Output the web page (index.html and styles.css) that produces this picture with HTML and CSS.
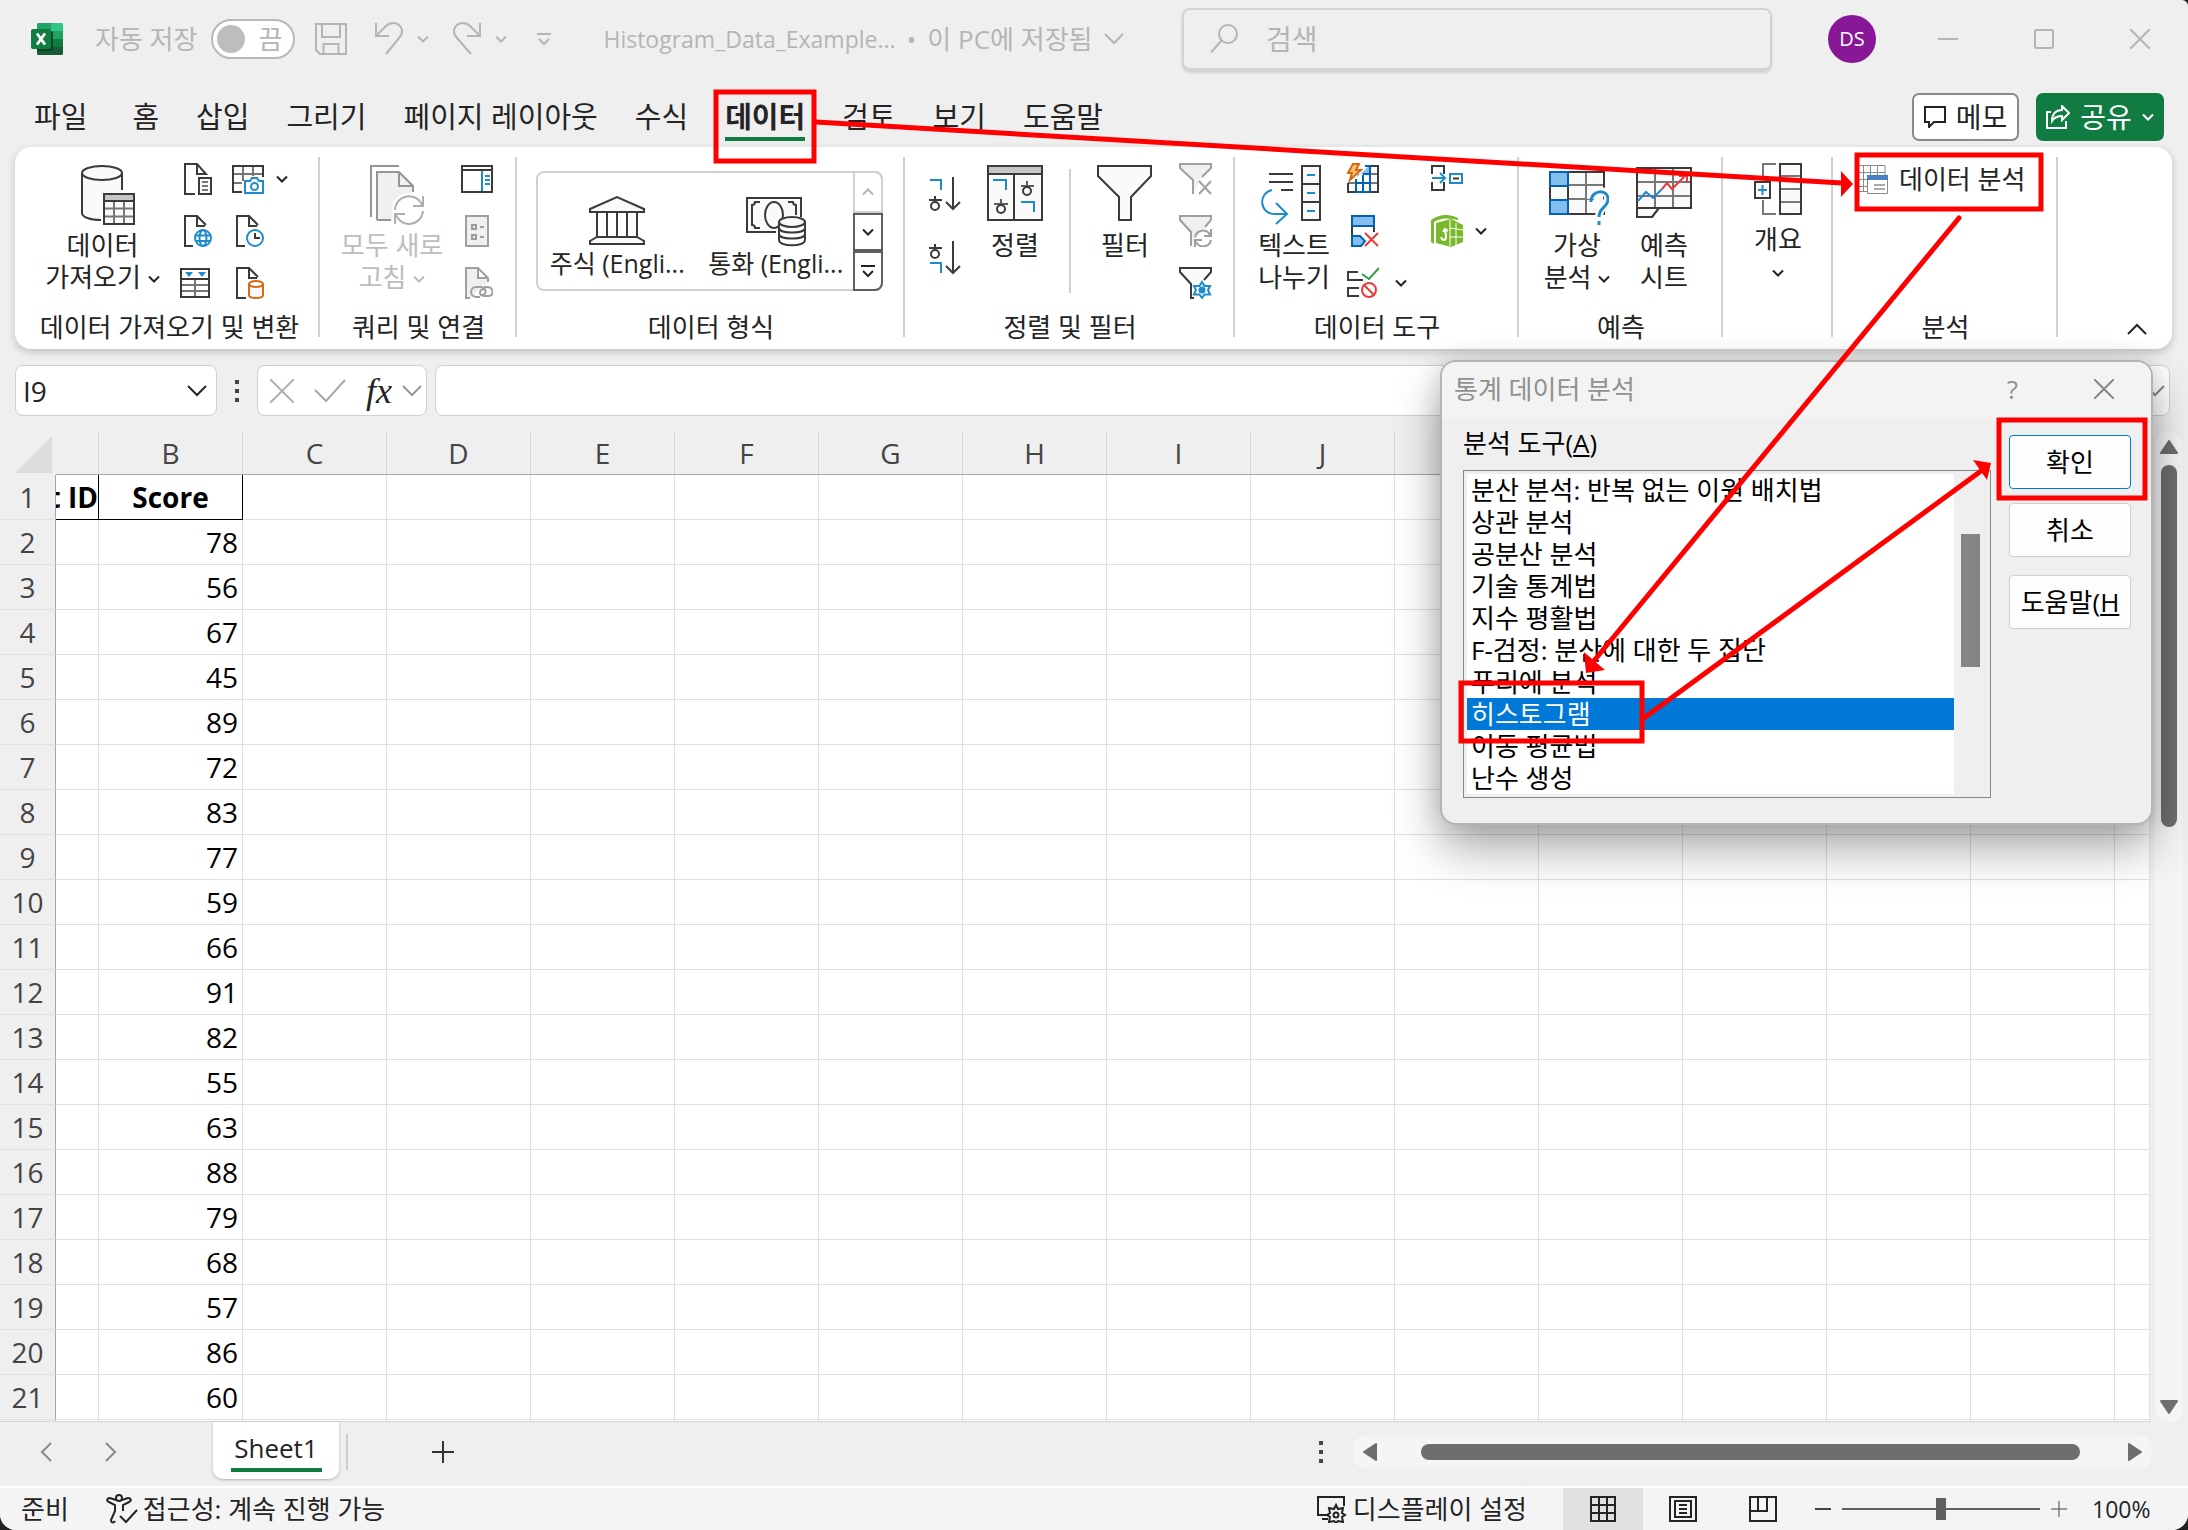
FILE: index.html
```html
<!DOCTYPE html>
<html lang="ko">
<head>
<meta charset="utf-8">
<title>Histogram_Data_Example - Excel</title>
<link rel="stylesheet" href="styles.css">
</head>
<body>
<svg class="defs" aria-hidden="true">
  <symbol id="chev" viewBox="0 0 12 8"><path d="M1 1.5l5 5 5-5" fill="none" stroke="currentColor" stroke-width="2"/></symbol>
  <symbol id="chev-lg" viewBox="0 0 20 12"><path d="M1 1l9 9 9-9" fill="none" stroke="currentColor" stroke-width="2"/></symbol>
  <symbol id="dots" viewBox="0 0 4 22"><path d="M0 0h4v4H0zM0 9h4v4H0zM0 18h4v4H0z" fill="#444"/></symbol>
</svg>
<div class="app">
  <header class="titlebar">
    <svg class="logo" width="32" height="32" viewBox="0 0 32 32"><path d="M6 1.500Q6 0 7.500 0H20v8H6z" fill="#21a366"/><path d="M20 0h10.500Q32 0 32 1.500V8H20z" fill="#33c481"/><path d="M6 8h14v8H6z" fill="#107c41"/><path d="M20 8h12v8H20z" fill="#21a366"/><path d="M6 16h26v8H6z" fill="#107c41"/><path d="M6 24h26v6.500q0 1.500-1.500 1.500h-23Q6 32 6 30.500z" fill="#185c37"/><path d="M6 8h14q2 0 2 2v16q0 2-2 2H6z" fill="#0b4527"/><rect y="6" width="20" height="20" rx="2" fill="#107c41"/><path d="M6 10.500l8 11M14 10.500l-8 11" stroke="#fff" stroke-width="2.800"/></svg>
    <label class="autosave"><span>자동 저장</span><input type="checkbox" class="sr"><span class="switch"><i></i>끔</span></label>
    <div class="quick">
      <button class="save" aria-label="저장"><svg width="32" height="32" viewBox="0 0 32 32" fill="none" stroke="currentColor" stroke-width="2"><path d="M1 1h30v30H5l-4-4zM7 1v13h18V1M8.500 31V21h15v10"/></svg></button>
      <button class="undo" aria-label="실행 취소"><svg width="28" height="34" viewBox="0 0 28 34" fill="none" stroke="currentColor" stroke-width="2"><path d="M1 1v13h13M1 14L11 4c4-4 11-4 14 0s3 8-1 12L11 32"/></svg><svg class="chev"><use href="#chev"/></svg></button>
      <button class="undo" aria-label="다시 실행"><svg width="28" height="34" viewBox="0 0 28 34" fill="none" stroke="currentColor" stroke-width="2"><path d="M27 1v13H14M27 14L17 4C13 0 6 0 3 4s-3 8 1 12l14 16"/></svg><svg class="chev"><use href="#chev"/></svg></button>
      <button class="custom" aria-label="빠른 실행 도구 모음"><svg width="14" height="14" viewBox="0 0 14 14" fill="none" stroke="currentColor" stroke-width="2"><path d="M0 2h14M2 7l5 5 5-5"/></svg></button>
    </div>
    <button class="docname"><span class="fname">Histogram_Data_Example...</span><span>•</span><span>이 PC에 저장됨</span><svg width="20" height="12"><use href="#chev-lg"/></svg></button>
    <label class="search"><svg width="28" height="30" viewBox="0 0 28 30" fill="none" stroke="#b5b5b5" stroke-width="2"><circle cx="18" cy="10" r="9"/><path d="M11.500 16.500L1 28.500"/></svg><input type="search" placeholder="검색" aria-label="검색"></label>
    <button class="avatar">DS</button>
    <div class="winctl">
      <button aria-label="최소화"><svg width="20" height="20" viewBox="0 0 20 20"><path d="M0 10h20" stroke="currentColor" stroke-width="2"/></svg></button>
      <button aria-label="최대화"><svg width="20" height="20" viewBox="0 0 20 20"><rect x="1" y="1" width="18" height="18" rx="2" fill="none" stroke="currentColor" stroke-width="2"/></svg></button>
      <button aria-label="닫기"><svg width="20" height="20" viewBox="0 0 20 20"><path d="M0 0l20 20M20 0L0 20" stroke="currentColor" stroke-width="2"/></svg></button>
    </div>
  </header>

  <nav class="tabs">
    <button class="file">파일</button><button>홈</button><button>삽입</button><button>그리기</button><button>페이지 레이아웃</button><button>수식</button><button class="active">데이터</button><button>검토</button><button>보기</button><button>도움말</button>
    <div class="tab-actions">
      <button class="memo"><svg width="22" height="22" viewBox="0 0 22 22"><path d="M1 1h20v15H10l-5 5v-5H1z" fill="none" stroke="#242424" stroke-width="2"/></svg>메모</button>
      <button class="share"><svg width="24" height="24" viewBox="0 0 24 24" fill="none" stroke="#fff" stroke-width="2"><path d="M5 7H1v16h19v-7M16 1l7 7-7 7v-4c-5 0-8 2-10 5 0-7 4-11 10-11z"/></svg>공유<svg class="chev"><use href="#chev"/></svg></button>
    </div>
  </nav>

  <section class="ribbon">
    <div class="group g1">
      <div class="tools">
        <button class="big"><svg width="64" height="60" viewBox="-10 0 64 60" fill="none" stroke="#3b3a39" stroke-width="2"><path d="M1 8v40c0 4 9 7 19 7l1-27h20V8" fill="#fafafa" stroke="none"/><ellipse cx="21" cy="8" rx="20" ry="7" fill="#fafafa"/><path d="M1 8v40c0 4 8 7 19 7M41 8v17"/><path d="M23 29h30v30H23z" fill="#fafafa"/><path d="M24 30h28v5H24z" fill="#c8c6c4" stroke="none"/><path d="M23 43.500h30M23 51.500h30M33 36v23M43 36v23" stroke="#797775"/><path d="M23 29h30v30H23zM23 36h30"/></svg><span>데이터<br>가져오기 <svg class="chev"><use href="#chev"/></svg></span></button>
        <div class="small">
          <button aria-label="텍스트/CSV에서"><svg width="32" height="32" viewBox="0 0 32 32" fill="none" stroke="#3b3a39" stroke-width="2"><path d="M15 31H5V1h12l9 10h-9V1"/><path d="M19 15h12v16H19z" fill="#fafafa"/><path d="M22 19h6M22 23h6M22 27h6" stroke="#797775"/></svg></button>
          <button aria-label="그림에서"><svg width="32" height="32" viewBox="0 0 32 32" fill="none" stroke="#3b3a39" stroke-width="2"><path d="M1 11h30M11 3v15M21 3v10M1 20h9" stroke="#797775"/><path d="M10 29H1V3h30v11"/><path d="M13 18h5l2-3h5l2 3h4v12H13z" fill="#fff" stroke="#1e8bcd"/><circle cx="22.500" cy="23.500" r="3.500" stroke="#1e8bcd"/></svg><svg class="chev"><use href="#chev"/></svg></button>
          <button aria-label="웹에서"><svg width="32" height="32" viewBox="0 0 32 32" fill="none" stroke="#3b3a39" stroke-width="2"><path d="M13 31H5V1h12l9 9M17 1v10h8"/><circle cx="23" cy="23" r="8" stroke="#1e8bcd"/><ellipse cx="23" cy="23" rx="3.500" ry="8" stroke="#1e8bcd"/><path d="M15 20.500h16M15 26h16" stroke="#1e8bcd"/></svg></button>
          <button aria-label="최근 원본"><svg width="32" height="32" viewBox="0 0 32 32" fill="none" stroke="#3b3a39" stroke-width="2"><path d="M13 31H5V1h12l9 9M17 1v10h8"/><circle cx="23" cy="23" r="8" fill="#fff" stroke="#1e8bcd"/><path d="M23 18v5h5"/></svg></button>
          <button aria-label="테이블/범위에서"><svg width="32" height="32" viewBox="0 0 32 32" fill="none" stroke="#3b3a39" stroke-width="2"><path d="M1 18h29M1 24h29M15 12v18" stroke="#797775"/><path d="M1 2h28v28H1zM1 12h28"/><path d="M5 5h8l-4 5zM18 5h8l-4 5z" fill="#1e8bcd" stroke="none"/></svg></button>
          <button aria-label="기존 연결"><svg width="32" height="32" viewBox="0 0 32 32" fill="none" stroke="#3b3a39" stroke-width="2"><path d="M14 31H5V1h12l9 9M17 1v10h8"/><path d="M17 17v11c0 4 14 4 14 0V17" fill="#fafafa" stroke="#d8680b"/><ellipse cx="24" cy="17" rx="7" ry="3" fill="#fff" stroke="#d8680b"/></svg></button>
        </div>
      </div>
      <h2>데이터 가져오기 및 변환</h2>
    </div>
    <div class="group g2">
      <div class="tools">
        <button class="big dim"><svg width="64" height="60" viewBox="-10 0 64 60" fill="none" stroke="#979593" stroke-width="2"><path d="M1 52V1h28"/><path d="M8 8h21l13 14v6L22 54H8z" fill="#f0f0f0" stroke="none"/><path d="M7 55V7h22l14 14v6M29 7v14h14M7 55h14"/><circle cx="39" cy="45" r="17" fill="#fff" stroke="none"/><path d="M25 45a14 14 0 0 1 27-5M53 31v10H43M53 46a14 14 0 0 1-27 4M25 59V49h10" stroke="#b0aeac"/></svg><span>모두 새로<br>고침 <svg class="chev"><use href="#chev"/></svg></span></button>
        <div class="small one">
          <button aria-label="쿼리 및 연결"><svg width="32" height="32" viewBox="0 0 32 32" fill="none" stroke="#3b3a39" stroke-width="2"><path d="M1 3h30v26H1zM1 7h30"/><path d="M21 8v20M24 13h5M24 17h5M24 21h5" stroke="#1e8bcd"/></svg></button>
          <button aria-label="속성" disabled><svg width="32" height="32" viewBox="0 0 32 32" fill="none" stroke="#a19f9d" stroke-width="2"><path d="M5 1h22v30H5z" fill="#f0f0f0"/><path d="M11 10h4v4h-4zM11 20h4v4h-4zM19 12h4M19 22h4"/></svg></button>
          <button aria-label="통합 문서 링크" disabled><svg width="32" height="32" viewBox="0 0 32 32" fill="none" stroke="#a19f9d" stroke-width="2"><path d="M9 31H5V1h12l10 10v4M17 1v10h10" fill="#f0f0f0"/><path d="M19 30h-4c-7-1-6-10 0-10h5c6 1 6 8 1 8h-2M23 20h4c6 1 6 9 0 9h-4c-6-1-5-7 1-7"/></svg></button>
        </div>
      </div>
      <h2>쿼리 및 연결</h2>
    </div>
    <div class="group g3">
      <div class="tools">
        <div class="gallery">
          <button><svg width="56" height="52" viewBox="0 0 56 52" fill="none" stroke="#3b3a39" stroke-width="2"><path d="M1 17v-3L28 2l27 12v3zM1 49v-3l7-4h40l7 4v3z" fill="#fafafa"/><path d="M8 18v24M18 18v24M28 18v24M38 18v24M48 18v24"/></svg><span>주식 (Engli...</span></button>
          <button><svg width="60" height="52" viewBox="0 0 60 52" fill="none" stroke="#3b3a39" stroke-width="2"><path d="M30 37H1V3h54v19" fill="#fafafa"/><path d="M14 7H9q0 3-3 3v20q3 0 3 3h5M42 7h5q0 3 3 3v10"/><ellipse cx="28" cy="20" rx="9" ry="13"/><path d="M33 27v18c0 7 26 7 26 0V27" fill="#fff"/><ellipse cx="46" cy="27" rx="13" ry="5" fill="#fafafa"/><path d="M33 33c0 6 26 6 26 0M33 39c0 6 26 6 26 0"/></svg><span>통화 (Engli...</span></button>
          <div class="gallery-nav">
            <button disabled aria-label="이전"><svg class="chev up"><use href="#chev"/></svg></button>
            <button aria-label="다음"><svg class="chev"><use href="#chev"/></svg></button>
            <button aria-label="자세히"><svg width="14" height="14" viewBox="0 0 14 14" fill="none" stroke="#242424" stroke-width="2"><path d="M0 2h14M2 7l5 5 5-5"/></svg></button>
          </div>
        </div>
      </div>
      <h2>데이터 형식</h2>
    </div>
    <div class="group g4">
      <div class="tools">
        <div class="sorts">
          <button aria-label="오름차순"><svg width="34" height="36" viewBox="0 0 34 36" fill="none" stroke="#3b3a39" stroke-width="2"><path d="M3 4h11v10" stroke="#1e8bcd"/><path d="M8 20v3M2 24h13M26 1v32M19 26l7 7 7-7"/><circle cx="8" cy="30" r="4"/></svg></button>
          <button aria-label="내림차순"><svg width="34" height="36" viewBox="0 0 34 36" fill="none" stroke="#3b3a39" stroke-width="2"><path d="M3 23h11v10" stroke="#1e8bcd"/><path d="M8 4v3M2 8h13M26 1v32M19 26l7 7 7-7"/><circle cx="8" cy="14" r="4"/></svg></button>
        </div>
        <button class="big"><svg width="56" height="60" viewBox="0 0 56 60" fill="none" stroke="#3b3a39" stroke-width="2"><path d="M1 1h54v54H1z" fill="#fafafa"/><path d="M2 2h52v7H2z" fill="#c8c6c4" stroke="none"/><path d="M1 1h54v54H1zM1 9h54M27 9v46"/><path d="M6 15h13v10M34 37h13v10" stroke="#1e8bcd"/><path d="M40 16v4M34 21h13M14 34v4M7 39h14" stroke="#605e5c"/><circle cx="40" cy="26" r="4"/><circle cx="14" cy="44" r="4"/></svg><span>정렬</span></button>
        <hr>
        <button class="big"><svg width="56" height="60" viewBox="0 0 56 60" fill="none" stroke="#3b3a39" stroke-width="2"><path d="M1 1h53v10L34 32v23H22V32L1 11z" fill="#fafafa"/></svg><span>필터</span></button>
        <div class="small one">
          <button aria-label="지우기" disabled><svg width="34" height="32" viewBox="0 0 34 32" fill="none" stroke="#a19f9d" stroke-width="2"><path d="M14 31V17L1 5V1h31v4l-9 9" fill="#f0f0f0"/><path d="M20 18l12 13M32 18L20 31"/></svg></button>
          <button aria-label="다시 적용" disabled><svg width="34" height="32" viewBox="0 0 34 32" fill="none" stroke="#a19f9d" stroke-width="2"><path d="M12 31V17L1 5V1h31v4l-6 7" fill="#f0f0f0"/><path d="M16 22a8 8 0 0 1 15-2M32 14v7h-7M32 25a8 8 0 0 1-15 2M16 32v-7h7"/></svg></button>
          <button aria-label="고급"><svg width="34" height="32" viewBox="0 0 34 32" fill="none" stroke="#3b3a39" stroke-width="2"><path d="M15 31h-3V17L1 5V1h31v4l-7 8" fill="#fafafa"/><circle cx="23" cy="23" r="9" fill="#fff" stroke="none"/><path d="M23 15l2.500 4 5.500 0-2 4 2 4.500h-5.500L23 31l-2.500-3.500H15l2-4.500-2-4h5.500z" stroke="#1e8bcd"/><circle cx="23" cy="23" r="2.500" fill="#1e8bcd" stroke="#1e8bcd"/></svg></button>
        </div>
      </div>
      <h2>정렬 및 필터</h2>
    </div>
    <div class="group g5">
      <div class="tools">
        <button class="big"><svg width="66" height="60" viewBox="0 0 66 60" fill="none" stroke="#3b3a39" stroke-width="2"><path d="M8 9h24M8 17h24M20 25h12"/><path d="M41 1h18v54H41zM41 19h18M41 37h18" fill="#fafafa"/><path d="M46 10h8M46 28h8M46 46h8M11 25C-3 28-2 49 14 49h11M15 38l11 11-11 10" stroke="#1e8bcd"/></svg><span>텍스트<br>나누기</span></button>
        <div class="small wide">
          <button aria-label="빠른 채우기"><svg width="32" height="32" viewBox="0 0 32 32" fill="none" stroke="#3b3a39" stroke-width="2"><path d="M31 11h-7M31 20H1" stroke="#797775"/><path d="M1 20v9h30V3h-7"/><path d="M10 14L22 3v8H10z" fill="#83beec" stroke="none"/><path d="M9 16v13h14V3h-5M9 20h14M16 12v17M16 11h7" stroke="#0063b1"/><path d="M6 1h6l-3 6h5L3 17l2-7H1z" fill="#ffc078" stroke="#d8680b"/></svg></button>
          <button aria-label="통합"><svg width="32" height="32" viewBox="0 0 32 32" fill="none" stroke="#3b3a39" stroke-width="2"><path d="M1 11V3h12v8M1 19v8h12v-8"/><path d="M1 15h12M9 10l5 5-5 5M19 11h12v9H19z" stroke="#1e8bcd"/><path d="M22 15.500h6"/></svg></button>
          <button aria-label="중복된 항목 제거"><svg width="32" height="32" viewBox="0 0 32 32" fill="none" stroke="#0063b1" stroke-width="2"><path d="M5 1h22v10H5z" fill="#83beec"/><path d="M5 21h8l5 5-4 5H5z" fill="#83beec"/><path d="M5 12v8M27 12v5" stroke="#3b3a39"/><path d="M18 18l13 13M31 18L18 31" stroke="#e83b3b"/></svg></button>
          <button aria-label="관계"><svg width="32" height="32" viewBox="0 0 32 32"><path d="M0 5Q13-4 27 3v2Q12 1 3 7v22l-3-2z" fill="#78b82a"/><path d="M5 8l15-4 12 6v17l-12 5-15-4z" fill="#78b82a"/><path d="M19 5v26M25 8v22M19 13l13 2M19 22h13" stroke="#fff"/><path d="M14 14l1 7q0 4-2 4t-3-3M12 17l2-3 3 2" fill="none" stroke="#fff" stroke-width="2"/></svg><svg class="chev"><use href="#chev"/></svg></button>
          <button aria-label="데이터 유효성 검사"><svg width="32" height="32" viewBox="0 0 32 32" fill="none" stroke="#3b3a39" stroke-width="2"><path d="M11 5H1v8h15M12 21H1v8h11"/><path d="M15 7l7 5L32 1" stroke="#2ea043"/><circle cx="22" cy="23" r="7" stroke="#e83b3b"/><path d="M17 18l10 10" stroke="#e83b3b"/></svg><svg class="chev far"><use href="#chev"/></svg></button>
        </div>
      </div>
      <h2>데이터 도구</h2>
    </div>
    <div class="group g6">
      <div class="tools">
        <button class="big"><svg width="64" height="60" viewBox="-4 0 64 60" fill="none" stroke="#3b3a39" stroke-width="2"><path d="M1 7h54v42H1z" fill="#fafafa"/><path d="M19 20h36M19 34h26M37 7v42" stroke="#797775"/><path d="M19 7h36v18M19 49h22"/><path d="M1 7h18v14H1zM1 35h18v14H1z" fill="#83beec" stroke="#0063b1"/><path d="M1 22v12M19 22v12"/><path d="M42 34c1-11 17-10 17-1 0 8-9 8-9 19" stroke="#fff" stroke-width="8"/><path d="M42 37c0-13 17-13 17-3 0 9-9 8-9 18M50 56v4" stroke="#1e8bcd" stroke-width="3"/></svg><span>가상<br>분석 <svg class="chev"><use href="#chev"/></svg></span></button>
        <button class="big"><svg width="56" height="60" viewBox="0 0 56 60" fill="none" stroke="#3b3a39" stroke-width="2"><path d="M1 3h54v40H23l-7 9H1z" fill="#fafafa"/><path d="M1 17h54M1 31h54M19 3v40M37 3v40" stroke="#797775"/><path d="M1 3h54v40H23l-7 9H1zM1 43h22"/><path d="M2 36l8-9 7 6 9-9" stroke="#1e8bcd"/><path d="M26 24l5-6 5 6 14-14M43 11h8v7" stroke="#e83b3b"/></svg><span>예측<br>시트</span></button>
      </div>
      <h2>예측</h2>
    </div>
    <div class="group g7">
      <div class="tools">
        <button class="big"><svg width="50" height="56" viewBox="0 0 50 56" fill="none" stroke="#3b3a39" stroke-width="2"><path d="M23 1H10v16M10 37v14h13" stroke="#797775"/><path d="M27 1h21v50H27z" fill="#fafafa"/><path d="M27 13h21M27 26h21M27 39h21" stroke="#797775"/><path d="M27 1h21v50H27z"/><path d="M2 19h15v16H2z" fill="#fff"/><path d="M5 27h9M9.500 22v10" stroke="#1e8bcd"/></svg><span>개요<br><svg class="chev"><use href="#chev"/></svg></span></button>
      </div>
    </div>
    <div class="group g8">
      <div class="tools">
        <button class="analysis"><svg width="32" height="32" viewBox="0 0 32 32" fill="none" stroke="#8a8a8a"><path d="M0 2.500h28v26H0M0 9.500h28M0 16.500h12M0 23.500h12M6.500 2v26M13.500 2v10M20.500 2v10"/><path d="M10.500 12.500h20v18h-20z" fill="#fff"/><path d="M10 12h21v5H10z" fill="#4a80c0" stroke="none"/><path d="M17 22h11M17 26h11" stroke="#555"/></svg>데이터 분석</button>
      </div>
      <h2>분석</h2>
    </div>
    <button class="collapse" aria-label="리본 축소"><svg class="up" width="20" height="12"><use href="#chev-lg"/></svg></button>
  </section>

  <div class="formula">
    <label class="namebox"><input value="I9" aria-label="이름 상자"><svg width="20" height="12"><use href="#chev-lg"/></svg></label>
    <svg width="4" height="22"><use href="#dots"/></svg>
    <div class="fx">
      <button aria-label="취소"><svg width="24" height="24" viewBox="0 0 24 24"><path d="M0 0l24 24M24 0L0 24" stroke="#b0b0b0" stroke-width="2"/></svg></button>
      <button aria-label="입력"><svg width="32" height="24" viewBox="0 0 32 24"><path d="M1 11l11 11L31 1" fill="none" stroke="#a8a8a8" stroke-width="2"/></svg></button>
      <button class="fn">fx</button>
      <button aria-label="함수 목록"><svg class="grey" width="20" height="12"><use href="#chev-lg"/></svg></button>
    </div>
    <label class="entry"><input aria-label="수식 입력줄"><svg width="20" height="12"><use href="#chev-lg"/></svg></label>
  </div>

  <main class="sheet">
    <div class="grid">
      <table>
        <colgroup><col class="cn"><col class="ca"><col class="cx"><col class="cx"><col class="cx"><col class="cx"><col class="cx"><col class="cx"><col class="cx"><col class="cx"><col class="cx"><col class="cx"><col class="cx"><col class="cx"><col class="cx"><col class="cx"><col></colgroup>
        <thead><tr><th class="corner"><svg width="37" height="37" viewBox="0 0 37 37"><path d="M37 0v37H0z" fill="#dcdcdc"/></svg></th><th></th><th>B</th><th>C</th><th>D</th><th>E</th><th>F</th><th>G</th><th>H</th><th>I</th><th>J</th><th>K</th><th>L</th><th>M</th><th>N</th><th>O</th><th></th></tr></thead>
        <tbody>
        <tr><th>1<td class="head"><div>t ID</div><td class="head">Score<td><td><td><td><td><td><td><td><td><td><td><td><td><td>
        <tr><th>2<td><td>78<td><td><td><td><td><td><td><td><td><td><td><td><td><td>
        <tr><th>3<td><td>56<td><td><td><td><td><td><td><td><td><td><td><td><td><td>
        <tr><th>4<td><td>67<td><td><td><td><td><td><td><td><td><td><td><td><td><td>
        <tr><th>5<td><td>45<td><td><td><td><td><td><td><td><td><td><td><td><td><td>
        <tr><th>6<td><td>89<td><td><td><td><td><td><td><td><td><td><td><td><td><td>
        <tr><th>7<td><td>72<td><td><td><td><td><td><td><td><td><td><td><td><td><td>
        <tr><th>8<td><td>83<td><td><td><td><td><td><td><td><td><td><td><td><td><td>
        <tr><th>9<td><td>77<td><td><td><td><td><td><td><td><td><td><td><td><td><td>
        <tr><th>10<td><td>59<td><td><td><td><td><td><td><td><td><td><td><td><td><td>
        <tr><th>11<td><td>66<td><td><td><td><td><td><td><td><td><td><td><td><td><td>
        <tr><th>12<td><td>91<td><td><td><td><td><td><td><td><td><td><td><td><td><td>
        <tr><th>13<td><td>82<td><td><td><td><td><td><td><td><td><td><td><td><td><td>
        <tr><th>14<td><td>55<td><td><td><td><td><td><td><td><td><td><td><td><td><td>
        <tr><th>15<td><td>63<td><td><td><td><td><td><td><td><td><td><td><td><td><td>
        <tr><th>16<td><td>88<td><td><td><td><td><td><td><td><td><td><td><td><td><td>
        <tr><th>17<td><td>79<td><td><td><td><td><td><td><td><td><td><td><td><td><td>
        <tr><th>18<td><td>68<td><td><td><td><td><td><td><td><td><td><td><td><td><td>
        <tr><th>19<td><td>57<td><td><td><td><td><td><td><td><td><td><td><td><td><td>
        <tr><th>20<td><td>86<td><td><td><td><td><td><td><td><td><td><td><td><td><td>
        <tr><th>21<td><td>60<td><td><td><td><td><td><td><td><td><td><td><td><td><td>
        <tr><th><td><td><td><td><td><td><td><td><td><td><td><td><td><td><td><td>
        </tbody>
      </table>
    </div>
    <div class="vscroll">
      <svg width="18" height="14" viewBox="0 0 18 14"><path d="M9 1l8 12H1z" fill="#6e6e6e" stroke="#6e6e6e" stroke-linejoin="round" stroke-width="2"/></svg>
      <i></i>
      <svg width="18" height="14" viewBox="0 0 18 14"><path d="M9 13L1 1h16z" fill="#6e6e6e" stroke="#6e6e6e" stroke-linejoin="round" stroke-width="2"/></svg>
    </div>
  </main>

  <div class="sheetbar">
    <button class="nav" aria-label="이전 시트"><svg width="12" height="20" viewBox="0 0 12 20"><path d="M11 1l-9 9 9 9" fill="none" stroke="#8a8a8a" stroke-width="2"/></svg></button>
    <button class="nav next" aria-label="다음 시트"><svg width="12" height="20" viewBox="0 0 12 20"><path d="M1 1l9 9-9 9" fill="none" stroke="#8a8a8a" stroke-width="2"/></svg></button>
    <button class="sheet-tab"><span>Sheet1</span></button>
    <span class="divider"></span>
    <button class="add" aria-label="새 시트"><svg width="22" height="22" viewBox="0 0 22 22"><path d="M0 11h22M11 0v22" stroke="#333" stroke-width="2"/></svg></button>
    <svg class="grip" width="4" height="22"><use href="#dots"/></svg>
    <div class="hscroll">
      <svg width="14" height="18" viewBox="0 0 14 18"><path d="M1 9l12-8v16z" fill="#6e6e6e" stroke="#6e6e6e" stroke-linejoin="round" stroke-width="2"/></svg>
      <i></i>
      <svg width="14" height="18" viewBox="0 0 14 18"><path d="M13 9L1 1v16z" fill="#6e6e6e" stroke="#6e6e6e" stroke-linejoin="round" stroke-width="2"/></svg>
    </div>
  </div>

  <footer class="status">
    <span>준비</span>
    <button class="access"><svg width="32" height="30" viewBox="0 0 32 30" fill="none" stroke="#242424" stroke-width="2"><circle cx="13" cy="4" r="3"/><path d="M10 6L4 4C1 4 0 7 3 8l6 3v6L5 26c0 3 3 3 4 1M16 6l6-2c3 0 4 3 1 4l-6 3v6M14 22l6 6L31 16"/></svg>접근성: 계속 진행 가능</button>
    <button class="display"><svg width="30" height="28" viewBox="0 0 30 28" fill="none" stroke="#242424" stroke-width="2"><path d="M27 11V2H1v18h10M5 24h6"/><path d="M19 10l2 4 5-1-1 5 3 2-3 2 1 5-5-1-2 2-2-2-5 1 1-5-3-2 3-2-1-5 5 1z"/><circle cx="19" cy="20" r="2.500"/></svg>디스플레이 설정</button>
    <button class="view on" aria-label="기본"><svg width="26" height="26" viewBox="0 0 26 26" fill="none" stroke="#242424" stroke-width="2"><path d="M1 1h24v24H1zM9 1v24M17 1v24M1 9h24M1 17h24"/></svg></button>
    <button class="view" aria-label="페이지 레이아웃"><svg width="28" height="26" viewBox="0 0 28 26" fill="none" stroke="#242424" stroke-width="2"><path d="M1 1h26v24H1zM6 5h16v16H6zM10 9h8M10 13h8M10 17h8"/></svg></button>
    <button class="view" aria-label="페이지 나누기 미리 보기"><svg width="28" height="26" viewBox="0 0 28 26" fill="none" stroke="#242424" stroke-width="2"><path d="M1 1h26v24H1zM1 15h17V1M9 1v14"/></svg></button>
    <button class="zoom out" aria-label="축소"><svg width="16" height="16" viewBox="0 0 16 16"><path d="M0 8h16" stroke="#444" stroke-width="2"/></svg></button>
    <input type="range" min="0" max="100" value="50" aria-label="확대/축소">
    <button class="zoom in" aria-label="확대"><svg width="16" height="16" viewBox="0 0 16 16"><path d="M0 8h16M8 0v16" stroke="#444" stroke-width="1"/></svg></button>
    <span class="pct">100%</span>
  </footer>

  <section class="dialog" role="dialog" aria-labelledby="dlg">
    <header><h3 id="dlg">통계 데이터 분석</h3><button class="help" aria-label="도움말">?</button><button class="x" aria-label="닫기"><svg width="20" height="20" viewBox="0 0 20 20"><path d="M0 0l20 20M20 0L0 20" stroke="#888" stroke-width="2"/></svg></button></header>
    <div class="dlg-body">
      <div class="choices">
        <div class="caption" id="toolcap">분석 도구(<u>A</u>)</div>
        <div class="listbox">
          <ul role="listbox" aria-labelledby="toolcap">
            <li role="option">분산 분석: 반복 없는 이원 배치법</li><li role="option">상관 분석</li><li role="option">공분산 분석</li><li role="option">기술 통계법</li><li role="option">지수 평활법</li><li role="option">F-검정: 분산에 대한 두 집단</li><li role="option">푸리에 분석</li><li role="option" aria-selected="true">히스토그램</li><li role="option">이동 평균법</li><li role="option">난수 생성</li>
          </ul>
          <div class="track"><i></i></div>
        </div>
      </div>
      <div class="actions"><button class="ok">확인</button><button>취소</button><button class="hp">도움말(<u>H</u></button></div>
    </div>
  </section>

  <svg class="marks" aria-hidden="true">
    <g fill="none" stroke="#f00" stroke-width="5"><path d="M716 92h98v69h-98zM1857 155h184v54h-184zM1461 683h181v58h-181zM1999 420h146v78h-146z"/><path d="M816 122l1026 61M1959 218l-366 444M1644 718l337-247" stroke-linecap="round"/></g>
    <path d="M1853 184l-12 13v-26zM1586 673l-2-21 21 18zM1991 463l-18-3 14 20z" fill="#f00"/>
  </svg>
</div>
</body>
</html>
```
FILE: styles.css
```css
* { box-sizing: border-box; }
html, body { margin: 0; height: 100%; }
body { background: #222; color: #242424; font: 26px/32px "Open Sans", "Noto Sans CJK KR", sans-serif; }
button, input { font: inherit; color: inherit; border: 0; background: none; padding: 0; margin: 0; outline: 0; }
button { display: flex; align-items: center; justify-content: center; white-space: nowrap; }
svg { display: block; flex: none; }
h2, h3, ul { margin: 0; padding: 0; font: inherit; list-style: none; }
.defs { position: absolute; width: 0; height: 0; }
.sr { position: absolute; opacity: 0; }
.chev { width: 12px; height: 8px; }
.up { transform: rotate(180deg); }

.app { position: relative; display: flex; flex-direction: column; height: 100vh; overflow: hidden; background: #efefef; border-radius: 0 6px 16px 16px; }

/* Title bar */
.titlebar { display: flex; align-items: center; height: 78px; flex: none; padding-left: 31px; padding-right: 38px; color: #b5b5b5; }
.autosave { display: flex; align-items: center; gap: 14px; margin-left: 32px; white-space: nowrap; }
.switch { display: flex; align-items: center; justify-content: space-between; width: 84px; height: 40px; padding: 0 11px 0 4px; border: 2px solid #b8b8b8; border-radius: 20px; background: #fff; }
.switch i { width: 28px; height: 28px; border-radius: 50%; background: #bdbdbd; }
.quick { display: flex; align-items: center; margin-left: 20px; gap: 24px; }
.save { margin-right: 4px; }
.undo { gap: 14px; }
.custom { margin-left: 6px; }
.docname { margin-left: 52px; gap: 11px; }
.fname { font-size: 23px; }
.search { display: flex; align-items: center; gap: 28px; width: 590px; height: 63px; margin-left: auto; padding-left: 26px; border: 2px solid #d2d2d2; border-bottom-width: 3px; border-radius: 8px; box-shadow: 0 2px 3px #0002; }
.search input { width: 400px; font-size: 28px; }
.search input::placeholder { color: #b5b5b5; opacity: 1; }
.avatar { width: 48px; height: 48px; margin-left: 56px; border-radius: 50%; background: #881798; color: #fff; font-size: 20px; }
.winctl { display: flex; gap: 76px; margin-left: 62px; }

/* Ribbon tabs */
.tabs { display: flex; align-items: center; gap: 37px; height: 69px; flex: none; padding: 9px 24px 0 34px; font-size: 29px; line-height: 36px; }
.tabs > button { height: 48px; padding-top: 4px; border-bottom: 4px solid transparent; }
.file { margin-right: 8px; }
.tabs > .active { border-color: #107c41; font-weight: 700; }
.tab-actions { display: flex; gap: 17px; margin-left: auto; font-size: 28px; }
.memo, .share { height: 48px; border-radius: 7px; gap: 10px; }
.memo { width: 107px; border: 2px solid #8a8a8a; background: #fff; }
.share { width: 128px; background: #107c41; color: #fff; }

/* Ribbon */
.ribbon { display: flex; flex: none; margin: 0 16px 0 15px; height: 202px; background: #fff; border-radius: 16px; box-shadow: 0 3px 8px #0003; }
.group { position: relative; display: flex; flex-direction: column; flex: none; padding-top: 6px; }
.group::after { content: ""; position: absolute; right: 0; top: 10px; width: 2px; height: 180px; background: #d0d0d0; }
.tools { display: flex; height: 156px; }
.group h2 { line-height: 36px; text-align: center; }
.big { flex-direction: column; justify-content: flex-start; gap: 4px; padding-top: 12px; height: 140px; }
.big .chev { display: inline-block; vertical-align: 4px; }
.dim { color: #bdbdbd; }
.small { display: grid; grid-template-columns: 32px 32px; grid-auto-rows: 52px; column-gap: 20px; }
.small button { justify-content: flex-start; gap: 12px; }
.small.one { grid-template-columns: 32px; }
.small.wide { column-gap: 52px; }
.small .far { margin-left: 4px; }
.g1 { width: 305px; } .g1 .tools { padding-left: 26px; gap: 16px; } .g1 .big { width: 123px; }
.g1 h2 { padding-left: 4px; }
.g2 { width: 197px; } .g2 .tools { padding-left: 21px; gap: 18px; } .g2 .big { width: 102px; }
.g3 { width: 388px; } .g3 .tools { padding: 18px 0 0 19px; }
.g4 { width: 330px; } .g4 .tools { padding-left: 22px; gap: 26px; } .g4 .big { width: 56px; }
.g5 { width: 284px; } .g5 .tools { padding-left: 24px; gap: 18px; } .g5 .big { width: 70px; }
.g6 { width: 204px; } .g6 .tools { padding-left: 22px; gap: 22px; } .g6 .big { width: 72px; } .g6 .big + .big { width: 58px; }
.g7 { width: 110px; } .g7 .tools { justify-content: center; }
.g7 .big { padding-top: 10px; }
.g8 { width: 225px; } .g8 .tools { padding-left: 24px; align-items: flex-start; }
.analysis { gap: 10px; height: 52px; }
.gallery { display: flex; width: 347px; height: 120px; border: 2px solid #d0d0d0; border-radius: 8px; font-size: 25px; }
.gallery > button { flex: 1; flex-direction: column; justify-content: flex-end; padding-bottom: 10px; }
.gallery-nav { display: flex; flex-direction: column; width: 30px; margin: -2px; }
.gallery-nav button { height: 38px; border: 2px solid #605e5c; }
.gallery-nav button:first-child { height: 42px; border-color: #d0d0d0; border-radius: 0 8px 0 0; color: #b5b5b5; }
.gallery-nav button:last-child { height: 40px; border-radius: 0 0 8px 0; }
.sorts { display: flex; flex-direction: column; padding-top: 9px; }
.sorts button { height: 64px; }
.tools hr { width: 2px; height: 124px; margin: 16px 0 0; border: 0; background: #d0d0d0; }
.collapse { margin: auto 25px 14px auto; }

/* Formula bar */
.formula { display: flex; align-items: center; flex: none; height: 51px; margin: 16px 18px 16px 15px; }
.formula label, .fx { display: flex; align-items: center; height: 51px; border: 1px solid #d0d0d0; border-radius: 8px; background: #fff; }
.namebox { width: 202px; padding: 0 9px 0 7px; margin-right: 18px; }
.namebox input { width: 164px; font-size: 28px; }
.fx { width: 170px; margin: 0 8px 0 18px; padding-left: 12px; gap: 20px; }
.fn { width: 26px; font: italic 36px/40px "Liberation Serif", serif; margin-right: -10px; }
.grey { color: #979797; }
.formula .entry { flex: 1; padding-right: 4px; color: #888; }
.entry input { flex: 1; }

/* Grid */
.sheet { display: flex; flex: 1; min-height: 0; }
.grid { flex: 1; min-width: 0; overflow: hidden; border-bottom: 1px solid #d5d5d5; }
table { width: 100%; table-layout: fixed; border-collapse: separate; border-spacing: 0; font-size: 28px; line-height: 36px; }
.cn { width: 56px; } .ca { width: 43px; } .cx { width: 144px; }
th, td { height: 45px; padding: 0 4px; border-right: 1px solid #e0e0e0; border-bottom: 1px solid #e0e0e0; background: #fff; color: #000; text-align: right; }
th { background: #efefef; color: #444; font-weight: 400; text-align: center; }
thead th { height: 43px; border-bottom-color: #a6a6a6; border-right-color: #d8d8d8; }
tbody th { border-right-color: #a6a6a6; padding: 0 2px; }
.corner { border-color: #efefef; padding: 2px 3px 0 15px; }
td.head { font-weight: 700; text-align: center; border-color: #000; }
.head div { display: flex; justify-content: flex-end; overflow: hidden; margin: 0 -4px; white-space: nowrap; }
.vscroll { display: flex; flex-direction: column; align-items: center; width: 28px; margin: 0 5px; padding: 8px 0; background: #f5f5f5; border-radius: 14px; }
.vscroll i { width: 16px; height: 362px; margin: 11px 0 auto; border-radius: 8px; background: #6e6e6e; }

/* Sheet tabs */
.sheetbar { display: flex; align-items: center; flex: none; height: 64px; padding: 0 0 4px 40px; }
.next { margin-left: 53px; }
.sheet-tab { align-items: flex-start; align-self: flex-start; width: 126px; height: 57px; margin-left: 96px; background: #fff; border-radius: 0 0 10px 10px; box-shadow: 0 1px 3px #0004; }
.sheet-tab span { width: 91px; height: 50px; padding-top: 8px; border-bottom: 4px solid #107c41; line-height: 36px; }
.divider { width: 2px; height: 36px; margin-left: 7px; background: #cfcfcf; }
.add { margin-left: 84px; }
.grip { margin-left: auto; }
.hscroll { display: flex; align-items: center; flex: 0 1 799px; height: 34px; margin: 0 36px 0 30px; padding: 0 10px; border-radius: 14px; background: #f5f5f5; }
.hscroll i { flex: 1; height: 16px; margin: 0 48px 0 44px; border-radius: 8px; background: #6e6e6e; }

/* Status bar */
.status { display: flex; align-items: center; flex: none; height: 44px; padding: 0 37px 0 21px; border-top: 2px solid #fff; background: #f4f4f4; white-space: nowrap; }
.access { gap: 5px; margin-left: 37px; }
.display { gap: 6px; margin-left: auto; margin-right: 36px; }
.view { width: 80px; height: 42px; }
.on { background: #e0e0e0; }
.out { margin-left: 12px; }
input[type=range] { appearance: none; width: 198px; height: 22px; margin: 0 11px; background: linear-gradient(#606060, #606060) center / 100% 2px no-repeat; }
input[type=range]::-webkit-slider-thumb { appearance: none; width: 10px; height: 22px; background: #606060; }
.pct { margin-left: 25px; width: 59px; font-size: 23px; }

/* Analysis dialog */
.dialog { position: absolute; left: 1440px; top: 360px; width: 713px; padding-bottom: 25px; border: 2px solid #b4b4b4; border-radius: 16px; background: #efefef; color: #000; box-shadow: 0 24px 48px #0005, 0 0 24px #0002; overflow: visible; }
.dialog header { display: flex; align-items: center; height: 57px; padding: 0 37px 4px 12px; background: #f3f3f3; border-radius: 14px 14px 0 0; color: #919191; }
.help { margin-left: auto; }
.x { margin-left: 76px; }
.dlg-body { display: flex; gap: 18px; padding-left: 21px; }
.caption { height: 51px; line-height: 48px; }
.listbox { display: flex; width: 528px; height: 328px; padding: 3px 0 3px 3px; border: 1px solid #828790; background: #efefef; }
.listbox ul { width: 487px; background: #fff; }
.listbox li { height: 32px; padding-left: 4px; line-height: 32px; }
.listbox [aria-selected] { background: #0078d7; color: #fff; }
.track { flex: 1; padding: 60px 0 0 7px; }
.track i { display: block; width: 19px; height: 133px; background: #858585; }
.actions { display: flex; flex-direction: column; padding-top: 16px; }
.actions button { width: 122px; height: 54px; margin-bottom: 14px; border: 1px solid #d0d0d0; border-radius: 4px; background: #fdfdfd; }
.actions .ok { border-color: #0078d4; }
.actions .hp { margin-top: 4px; }

/* Callouts */
.marks { position: absolute; left: 0; top: 0; width: 100%; height: 100%; pointer-events: none; }
```
